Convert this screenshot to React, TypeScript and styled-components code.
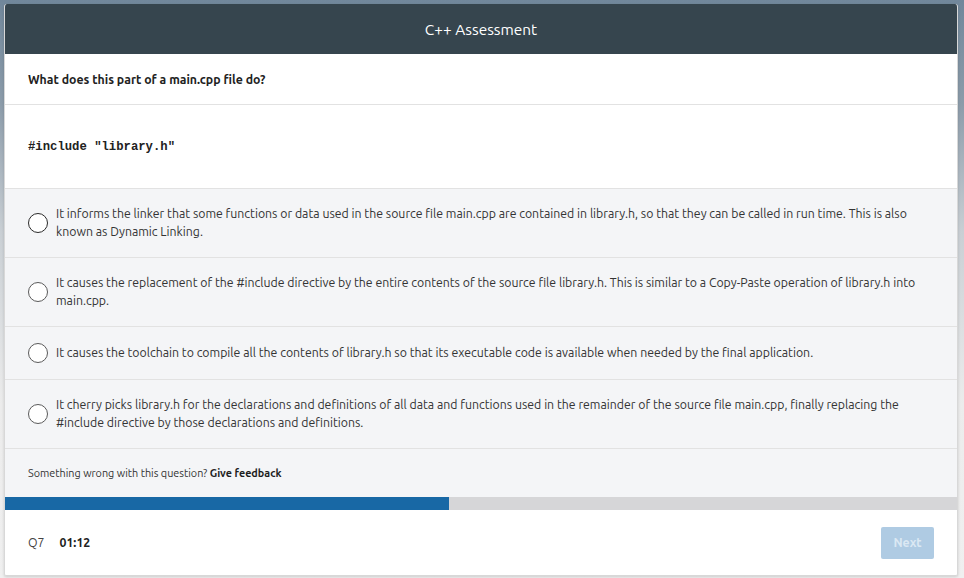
import * as React from 'react'
import styled, { createGlobalStyle } from 'styled-components'

const GlobalStyle = createGlobalStyle`
	html, body {
		margin: 0;
		padding: 0;
		height: 100%;
	}
	body {
		font-family: Ubuntu, Lato, 'Liberation Sans', sans-serif;
		background: linear-gradient(#71879b 0%, #8c9caa 18%, #c9cfd4 40%, #ececec 70%, #f0f0f0 100%);
		color: #2b2b2b;
	}
`

const Page = styled.div`
	width: 964px;
	height: 578px;
	padding: 4px 6px 2px 4px;
	box-sizing: border-box;
	display: flex;
`

const Card = styled.div`
	flex: 1;
	display: flex;
	flex-direction: column;
	background: #fff;
	border-left: 1px solid #d8d8d8;
	border-right: 1px solid #d8d8d8;
	border-bottom: 1px solid #d8d8d8;
	border-radius: 3px 3px 2px 2px;
	overflow: hidden;
	box-shadow: 0 1px 3px rgba(0, 0, 0, 0.15);
`

const Header = styled.div`
	height: 50px;
	background: #36454e;
	color: #fff;
	display: flex;
	align-items: center;
	justify-content: center;
	font-size: 15.4px;
`

const Question = styled.div`
	height: 50px;
	padding: 0 23px;
	display: flex;
	align-items: center;
	font-size: 12.3px;
	font-weight: 700;
	color: #222;
	border-bottom: 1px solid #e2e2e2;
`

const Code = styled.div`
	height: 83px;
	padding: 0 23px;
	display: flex;
	align-items: center;
	font-family: 'Liberation Mono', 'DejaVu Sans Mono', monospace;
	font-size: 12.25px;
	font-weight: 700;
	color: #222;
	border-bottom: 1px solid #e2e2e2;
`

const Option = styled.label`
	display: flex;
	align-items: center;
	gap: 8px;
	padding: 16px 40px 16px 23px;
	background: #f4f5f7;
	border-bottom: 1px solid #e2e2e2;
	font-size: 12.3px;
	line-height: 18px;
	color: #333;
	cursor: pointer;
`

const Radio = styled.span`
	flex: none;
	width: 18px;
	height: 18px;
	border-radius: 50%;
	border: 1.5px solid ${({ dark }: { dark?: boolean }) => (dark ? '#2a2a2a' : '#5a5a5a')};
	background: #fff;
`

const Feedback = styled.div`
	height: 48px;
	padding: 0 23px;
	display: flex;
	align-items: center;
	background: #f4f5f7;
	font-size: 10.8px;
	color: #333;

	b {
		color: #1e1e1e;
	}
`

const Progress = styled.div`
	height: 13px;
	background: #d6d6d8;
	display: flex;
`

const ProgressFill = styled.div`
	background: #1868a5;
	height: 100%;
`

const Footer = styled.div`
	flex: 1;
	display: flex;
	align-items: center;
	padding: 0 23px;
	font-size: 12.3px;
`

const QNum = styled.span`
	color: #444;
	margin-right: 15px;
`

const Timer = styled.span`
	font-weight: 700;
	color: #222;
`

const NextButton = styled.button`
	margin-left: auto;
	width: 53px;
	height: 32px;
	border: none;
	border-radius: 2px;
	background: #afcbe3;
	color: #dbe8f3;
	font-family: inherit;
	font-size: 12.3px;
	font-weight: 700;
	cursor: default;
`

const options = [
	'It informs the linker that some functions or data used in the source file main.cpp are contained in library.h, so that they can be called in run time. This is also known as Dynamic Linking.',
	'It causes the replacement of the #include directive by the entire contents of the source file library.h. This is similar to a Copy-Paste operation of library.h into main.cpp.',
	'It causes the toolchain to compile all the contents of library.h so that its executable code is available when needed by the final application.',
	'It cherry picks library.h for the declarations and definitions of all data and functions used in the remainder of the source file main.cpp, finally replacing the #include directive by those declarations and definitions.',
]

export default function App() {
	const progress = 46.6
	return (
		<>
			<GlobalStyle />
			<Page>
				<Card>
					<Header>C++ Assessment</Header>
					<Question>What does this part of a main.cpp file do?</Question>
					<Code>#include "library.h"</Code>
					{options.map((text, i) => (
						<Option key={i}>
							<Radio dark={i === 0} />
							<span>{text}</span>
						</Option>
					))}
					<Feedback>
						Something wrong with this question?&nbsp;<b>Give feedback</b>
					</Feedback>
					<Progress>
						<ProgressFill style={{ width: `${progress}%` }} />
					</Progress>
					<Footer>
						<QNum>Q7</QNum>
						<Timer>01:12</Timer>
						<NextButton>Next</NextButton>
					</Footer>
				</Card>
			</Page>
		</>
	)
}
